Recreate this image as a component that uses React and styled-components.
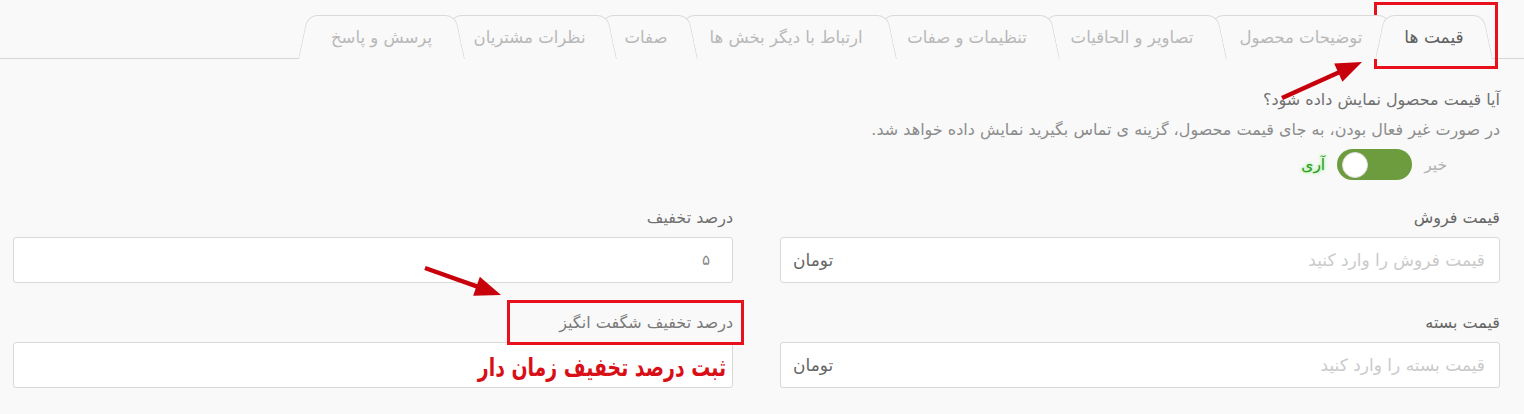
import React from "react";
import styled, { createGlobalStyle, css } from "styled-components";

const Global = createGlobalStyle`
  html, body { margin: 0; padding: 0; background: #f9f9f9; }
  body { font-family: "DejaVu Sans", "Noto Sans", sans-serif; }
  * { box-sizing: border-box; }
`;

const Page = styled.div`
  position: relative;
  direction: rtl;
  width: 1524px;
  height: 414px;
  overflow: hidden;
  background: #f9f9f9;
`;

const TabBar = styled.div`
  display: flex;
  align-items: flex-end;
  height: 59px;
  padding: 15px 31px 0 0;
  border-bottom: 1px solid #d6d6d6;
`;

const Tab = styled.div`
  position: relative;
  z-index: ${(p) => (p.$active ? 20 : 1)};
  flex: 0 0 ${(p) => p.$w}px;
  height: 44px;
  margin-bottom: -1px;
  display: flex;
  align-items: center;
  justify-content: center;
  white-space: nowrap;
  font-size: ${(p) => (p.$active ? 17 : 16.5)}px;
  color: ${(p) => (p.$active ? "#606060" : "#b8b8b8")};
  & + & { margin-right: -23px; }
  &::before, &::after {
    content: "";
    position: absolute;
    z-index: -1;
    top: 0;
    bottom: 0;
    width: 56%;
    background: #f9f9f9;
    border-top: 1px solid #dadada;
    transform-origin: bottom;
  }
  &::before {
    left: 0;
    border-left: 1px solid #dadada;
    border-top-left-radius: 10px;
    transform: skewX(-12deg);
  }
  &::after {
    right: 0;
    border-right: 1px solid #dadada;
    border-top-right-radius: 10px;
    transform: skewX(12deg);
  }
`;

const Content = styled.div`
  padding: 31px 24px 0 13px;
`;

const Question = styled.div`
  font-size: 16px;
  line-height: 20px;
  color: #707070;
`;

const Hint = styled.div`
  font-size: 16px;
  line-height: 20px;
  color: #8c8c8c;
  margin-top: 10px;
`;

const ToggleRow = styled.div`
  display: flex;
  align-items: center;
  gap: 12px;
  height: 31px;
  margin: 9px 53px 0 0;
`;

const ToggleText = styled.span`
  font-size: 15.5px;
  color: ${(p) => (p.$on ? "#2e9a22" : "#b0b0b0")};
  ${(p) =>
    p.$on &&
    css`
      text-shadow: 0 0 4px #8fe98a, 0 0 2px #b8f5b2;
    `}
`;

const Track = styled.div`
  position: relative;
  width: 75px;
  height: 31px;
  border-radius: 16px;
  background: #6c9c3e;
  display: flex;
  align-items: center;
  justify-content: flex-end;
  padding: 0 5px;
`;

const Knob = styled.div`
  width: 26px;
  height: 26px;
  border-radius: 50%;
  background: #fff;
  border: 1px solid #dcdcdc;
`;

const Grid = styled.div`
  display: grid;
  grid-template-columns: 1fr 1fr;
  column-gap: 47px;
  row-gap: 30px;
  margin-top: 28px;
`;

const Field = styled.div`
  display: flex;
  flex-direction: column;
  gap: 9px;
`;

const Label = styled.label`
  font-size: 16px;
  line-height: 20px;
  color: ${(p) => p.$tone || "#666"};
`;

const InputBox = styled.div`
  position: relative;
  height: 46px;
  background: #fff;
  border: 1px solid #d9d9d9;
  border-radius: 3px;
  display: flex;
  align-items: center;
  justify-content: space-between;
  padding: 0 14px 0 12px;
  font-size: 17px;
`;

const Placeholder = styled.span`
  color: #cacaca;
`;

const Value = styled.span`
  color: #888;
  font-size: 15px;
  padding-right: 8px;
`;

const Addon = styled.span`
  color: #666;
`;

const BigNote = styled.span`
  position: absolute;
  right: 6px;
  top: 10px;
  font-family: "DejaVu Sans Condensed", "DejaVu Sans", sans-serif;
  font-weight: bold;
  font-size: 21px;
  line-height: 30px;
  color: #d90f17;
  white-space: nowrap;
  transform: scaleY(1.2);
  transform-origin: right center;
`;

const RedBox = styled.div`
  position: absolute;
  border: 3px solid #e8101c;
`;

const ArrowSvg = styled.svg`
  position: absolute;
  overflow: visible;
`;

const tabs = [
  ["قیمت ها", 118],
  ["توضیحات محصول", 194],
  ["تصاویر و الحاقیات", 190],
  ["تنظیمات و صفات", 186],
  ["ارتباط با دیگر بخش ها", 222],
  ["صفات", 104],
  ["نظرات مشتریان", 175],
  ["پرسش و پاسخ", 167],
];

function Arrow({ x1, y1, x2, y2 }) {
  const dx = x2 - x1;
  const dy = y2 - y1;
  const len = Math.hypot(dx, dy);
  const ux = dx / len;
  const uy = dy / len;
  const hl = 26;
  const hw = 10;
  const bx = x2 - ux * hl;
  const by = y2 - uy * hl;
  const p1 = `${bx - uy * hw},${by + ux * hw}`;
  const p2 = `${bx + uy * hw},${by - ux * hw}`;
  return (
    <ArrowSvg width="1524" height="414" style={{ left: 0, top: 0 }}>
      <line x1={x1} y1={y1} x2={bx + ux * 4} y2={by + uy * 4} stroke="#c8000c" strokeWidth="4.5" />
      <polygon points={`${x2},${y2} ${p1} ${p2}`} fill="#c8000c" />
    </ArrowSvg>
  );
}

export default function App() {
  return (
    <>
      <Global />
      <Page>
        <TabBar>
          {tabs.map(([t, w], i) => (
            <Tab key={t} $active={i === 0} $w={w}>
              {t}
            </Tab>
          ))}
        </TabBar>
        <Content>
          <Question>آیا قیمت محصول نمایش داده شود؟</Question>
          <Hint>
            در صورت غیر فعال بودن، به جای قیمت محصول، گزینه ی تماس بگیرید نمایش داده خواهد شد.
          </Hint>
          <ToggleRow>
            <ToggleText>خیر</ToggleText>
            <Track>
              <Knob />
            </Track>
            <ToggleText $on>آری</ToggleText>
          </ToggleRow>
          <Grid>
            <Field>
              <Label>قیمت فروش</Label>
              <InputBox>
                <Placeholder>قیمت فروش را وارد کنید</Placeholder>
                <Addon>تومان</Addon>
              </InputBox>
            </Field>
            <Field>
              <Label $tone="#707070">درصد تخفیف</Label>
              <InputBox>
                <Value>۵</Value>
              </InputBox>
            </Field>
            <Field>
              <Label>قیمت بسته</Label>
              <InputBox>
                <Placeholder>قیمت بسته را وارد کنید</Placeholder>
                <Addon>تومان</Addon>
              </InputBox>
            </Field>
            <Field>
              <Label $tone="#7a7a7a">درصد تخفیف شگفت انگیز</Label>
              <InputBox>
                <BigNote>ثبت درصد تخفیف زمان دار</BigNote>
              </InputBox>
            </Field>
          </Grid>
        </Content>
        <RedBox style={{ left: 1374, top: 2, width: 124, height: 67 }} />
        <RedBox style={{ left: 507, top: 300, width: 237, height: 45 }} />
        <Arrow x1={1282} y1={98} x2={1362} y2={62} />
        <Arrow x1={425} y1={268} x2={501} y2={295} />
      </Page>
    </>
  );
}
